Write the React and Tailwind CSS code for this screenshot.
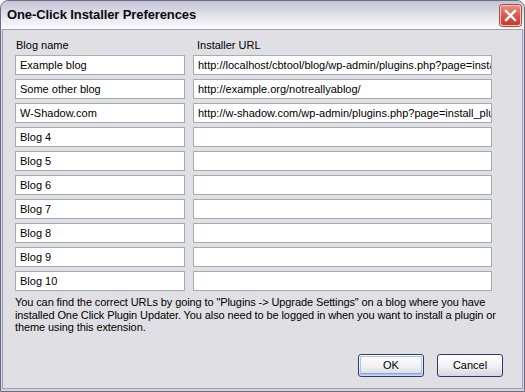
import React from 'react';

const blogs = [
    { name: 'Example blog', url: 'http://localhost/cbtool/blog/wp-admin/plugins.php?page=install_plugin' },
    { name: 'Some other blog', url: 'http://example.org/notreallyablog/' },
    { name: 'W-Shadow.com', url: 'http://w-shadow.com/wp-admin/plugins.php?page=install_plugin' },
    { name: 'Blog 4', url: '' },
    { name: 'Blog 5', url: '' },
    { name: 'Blog 6', url: '' },
    { name: 'Blog 7', url: '' },
    { name: 'Blog 8', url: '' },
    { name: 'Blog 9', url: '' },
    { name: 'Blog 10', url: '' },
];

const Field = ({ value, width }) => (
    <div className={`${width} h-[20px] bg-white border border-[#a5acb2] px-[4px] flex items-center overflow-hidden whitespace-nowrap`}>
        {value}
    </div>
);

const XPButton = ({ label, isDefault }) => (
    <div className="w-[66px] h-[23px] rounded-[3px] border border-[#2f3a6b] bg-gradient-to-b from-[#ffffff] via-[#f2f2f6] to-[#d6d5e0] p-[1px]">
        <div className={`w-full h-full rounded-[2px] flex items-center justify-center ${isDefault ? 'shadow-[inset_0_0_0_1px_#a9c3ec,inset_0_-1px_0_1px_#8aa8dd]' : ''}`}>
            {label}
        </div>
    </div>
);

export default function App() {
    return (
        <div className="w-[525px] h-[392px] bg-white">
            <div className="w-full h-full flex flex-col rounded-t-[8px] border border-[#6c6c86] bg-[#d4d4de] overflow-hidden text-[#000] font-['Liberation_Sans',Arial,sans-serif]">

                {/* Title bar */}
                <div className="h-[28px] shrink-0 flex items-center justify-between pl-[6px] pr-[3px] bg-gradient-to-b from-[#c3c3d4] via-[#e2e2ea] to-[#fbfbfd]">
                    <span className="text-[13px] font-bold tracking-[-0.1px] text-[#0a0a14]">One-Click Installer Preferences</span>
                    <div className="w-[21px] h-[21px] rounded-[3px] border border-[#f4c7c0] bg-gradient-to-b from-[#e58d80] via-[#d9594b] to-[#c2392c] flex items-center justify-center shadow-[0_0_0_1px_#b04a40]">
                        <svg width="13" height="13" viewBox="0 0 13 13">
                            <path d="M2 2 L11 11 M11 2 L2 11" stroke="#ffffff" strokeWidth="2.4" strokeLinecap="square" />
                        </svg>
                    </div>
                </div>

                {/* Dialog body */}
                <div className="flex-1 mx-[1px] mb-[2px] border border-[#a0a0b4] bg-[#e0dfe3] flex flex-col pt-[9px] pl-[12px] pr-[19px] pb-[11px] text-[11px] leading-[13px]">
                    <div className="flex gap-[8px] mb-[3px]">
                        <div className="w-[170px] pl-[1px]">Blog name</div>
                        <div className="pl-[4px]">Installer URL</div>
                    </div>

                    <div className="flex flex-col gap-[4px]">
                        {blogs.map((b, i) => (
                            <div key={i} className="flex gap-[8px]">
                                <Field value={b.name} width="w-[170px]" />
                                <Field value={b.url} width="w-[299px]" />
                            </div>
                        ))}
                    </div>

                    <p className="mt-[5px] leading-[12.5px] whitespace-nowrap tracking-[-0.1px]">
                        You can find the correct URLs by going to "Plugins -&gt; Upgrade Settings" on a blog where you have<br />
                        installed One Click Plugin Updater. You also need to be logged in when you want to install a plugin or<br />
                        theme using this extension.
                    </p>

                    <div className="mt-auto flex justify-end gap-[13px]">
                        <XPButton label="OK" isDefault />
                        <XPButton label="Cancel" />
                    </div>
                </div>
            </div>
        </div>
    );
}
